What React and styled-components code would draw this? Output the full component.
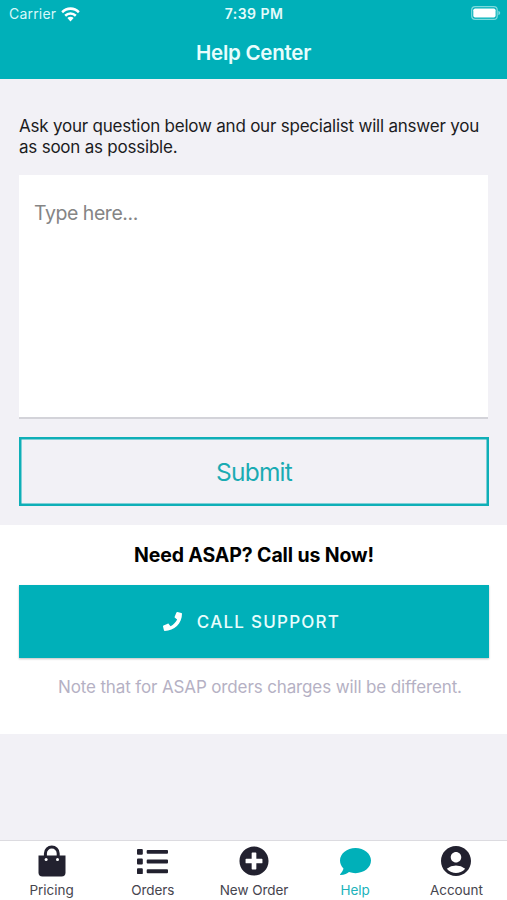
import React, { useState } from "react";
import styled, { createGlobalStyle } from "styled-components";
import { FaComment, FaList, FaPhone, FaPlusCircle } from "react-icons/fa";
import { MdAccountCircle } from "react-icons/md";

const GlobalStyle = createGlobalStyle`
  * {
    box-sizing: border-box;
  }
  body {
    margin: 0;
    background-color: #f2f1f6;
    font-family: Inter, "Liberation Sans", sans-serif;
  }
  button,
  textarea {
    font-family: inherit;
  }
`;

const Screen = styled.div`
  display: flex;
  flex-direction: column;
  width: 507px;
  height: 900px;
  overflow: hidden;
  background-color: #f2f1f6;
`;

const Header = styled.header`
  height: 79px;
  background-color: #00b0b9;
  color: #fff;
`;

const StatusBar = styled.div`
  display: grid;
  grid-template-columns: 1fr auto 1fr;
  align-items: center;
  height: 26px;
  padding: 0 6px 0 9px;
`;

const Carrier = styled.div`
  display: flex;
  align-items: center;
  gap: 5px;
  font-size: 14px;
  line-height: 18px;
  letter-spacing: 0.2px;
  color: #d8f8f9;
  padding-top: 2px;
`;

const Time = styled.div`
  font-size: 14px;
  font-weight: 600;
  line-height: 18px;
  letter-spacing: 0.45px;
  color: #e4fbfb;
  padding: 2px 2px 0 0;
`;

const BatteryIcon = styled.svg`
  justify-self: end;
`;

const Title = styled.h1`
  margin: 14px 0 0;
  font-size: 20.5px;
  font-weight: 600;
  line-height: 26px;
  text-align: center;
  letter-spacing: -0.25px;
  color: #e8fdfd;
`;

const Question = styled.section`
  display: flex;
  flex-direction: column;
  height: 446px;
  padding: 37px 19px 19px;
`;

const Prompt = styled.p`
  margin: 0 0 17px;
  font-size: 17px;
  line-height: 21px;
  letter-spacing: -0.22px;
  white-space: nowrap;
  color: #1c1c1e;
`;

const Message = styled.textarea`
  display: block;
  width: 469px;
  height: 244px;
  padding: 25px 15px;
  border: none;
  border-bottom: 2px solid #d3d3d9;
  outline: none;
  resize: none;
  font-size: 19.5px;
  line-height: 26px;
  letter-spacing: -0.45px;
  background-color: #fff;
  &::placeholder {
    color: #858585;
    opacity: 1;
  }
`;

const SubmitButton = styled.button`
  width: 470px;
  height: 69px;
  margin-top: 18px;
  padding: 0;
  border: none;
  box-shadow: inset 0 0 0 2.5px #0fafb7;
  background-color: transparent;
  color: #1aabb3;
  font-size: 24.5px;
  letter-spacing: -0.75px;
`;

const Support = styled.section`
  height: 209px;
  padding: 17px 18px 0 19px;
  background-color: #fff;
`;

const SupportTitle = styled.h2`
  margin: 0 0 17px;
  font-size: 19.5px;
  font-weight: 700;
  line-height: 26px;
  letter-spacing: -0.12px;
  text-align: center;
  color: #000;
`;

const CallButton = styled.button`
  display: flex;
  align-items: center;
  justify-content: center;
  gap: 15px;
  width: 470px;
  height: 73px;
  padding: 0 5px 0 0;
  border: none;
  background-color: #00b0b9;
  box-shadow: 0 1px 2px rgba(0, 0, 0, 0.25);
  color: #e8fdfd;
  font-size: 17px;
  font-weight: 500;
  letter-spacing: 1.25px;
  svg {
    color: #fff;
  }
`;

const Note = styled.p`
  margin: 18px 0 0 39px;
  font-size: 17px;
  line-height: 22px;
  letter-spacing: -0.13px;
  white-space: nowrap;
  color: #b5b1c4;
`;

const TabBar = styled.nav`
  display: grid;
  grid-template-columns: repeat(5, 1fr);
  height: 60px;
  margin-top: auto;
  padding-left: 1px;
  border-top: 1px solid #dcdbe0;
  background-color: #fff;
`;

const Tab = styled.button`
  display: flex;
  flex-direction: column;
  align-items: center;
  padding: 4px 0 0;
  border: none;
  background: none;
  color: ${(props) => (props.$active ? "#00b0b9" : "#22212f")};
`;

const IconBox = styled.span`
  display: flex;
  align-items: center;
  justify-content: center;
  height: 32px;
`;

const TabLabel = styled.span`
  margin-top: 4px;
  font-size: 13.5px;
  line-height: 18px;
  letter-spacing: -0.05px;
  white-space: nowrap;
  color: ${(props) => (props.$active ? "#20b3bb" : "#46454e")};
`;

const Wifi = () => (
  <svg width="19" height="15" viewBox="0 0 20 15" preserveAspectRatio="none">
    <g fill="none" stroke="#fff" strokeWidth="2.6">
      <path d="M1.2 5.2A12.7 12.7 0 0 1 18.8 5.2" />
      <path d="M4.4 8.7A8.1 8.1 0 0 1 15.6 8.7" />
    </g>
    <path d="M6.7 11.1a4.7 4.7 0 0 1 6.6 0L10 14.5z" fill="#fff" />
  </svg>
);

const Battery = () => (
  <BatteryIcon width="30" height="14" viewBox="0 0 30 14">
    <rect
      x="0.7"
      y="0.7"
      width="25.5"
      height="12.6"
      rx="3.4"
      fill="none"
      stroke="#7ddadd"
      strokeWidth="1.2"
    />
    <rect x="2.3" y="2.4" width="22.3" height="9.2" rx="1.8" fill="#fff" />
    <path d="M27.4 4.8c2.4 1 2.4 3.4 0 4.4z" fill="#7ddadd" />
  </BatteryIcon>
);

const Bag = () => (
  <svg width="28" height="32" viewBox="0 0 28 32">
    <path
      d="M7.4 14V8.4a6.4 6.4 0 0 1 12.8 0V14"
      fill="none"
      stroke="currentColor"
      strokeWidth="3"
    />
    <path
      d="M.5 10.5h27v17a4 4 0 0 1-4 4h-19a4 4 0 0 1-4-4z"
      fill="currentColor"
    />
    <circle cx="8.1" cy="14.5" r="1.5" fill="#fff" />
    <circle cx="19.5" cy="14.5" r="1.5" fill="#fff" />
  </svg>
);

const tabs = [
  { name: "Pricing", icon: <Bag /> },
  { name: "Orders", icon: <FaList size={31} /> },
  { name: "New Order", icon: <FaPlusCircle size={30} /> },
  { name: "Help", icon: <FaComment size={31} /> },
  { name: "Account", icon: <MdAccountCircle size={36} /> },
];

const App = () => {
  const [activeTab, setActiveTab] = useState("Help");
  const [message, setMessage] = useState("");

  return (
    <Screen>
      <GlobalStyle />
      <Header>
        <StatusBar>
          <Carrier>
            Carrier
            <Wifi />
          </Carrier>
          <Time>7:39 PM</Time>
          <Battery />
        </StatusBar>
        <Title>Help Center</Title>
      </Header>
      <Question>
        <Prompt>
          Ask your question below and our specialist will answer you
          <br />
          as soon as possible.
        </Prompt>
        <Message
          placeholder="Type here..."
          value={message}
          onChange={(e) => setMessage(e.target.value)}
        />
        <SubmitButton>Submit</SubmitButton>
      </Question>
      <Support>
        <SupportTitle>Need ASAP? Call us Now!</SupportTitle>
        <CallButton>
          <FaPhone size={19} />
          CALL SUPPORT
        </CallButton>
        <Note>Note that for ASAP orders charges will be different.</Note>
      </Support>
      <TabBar>
        {tabs.map((tab) => (
          <Tab
            key={tab.name}
            $active={tab.name === activeTab}
            onClick={() => setActiveTab(tab.name)}
          >
            <IconBox>{tab.icon}</IconBox>
            <TabLabel $active={tab.name === activeTab}>{tab.name}</TabLabel>
          </Tab>
        ))}
      </TabBar>
    </Screen>
  );
};

export default App;
